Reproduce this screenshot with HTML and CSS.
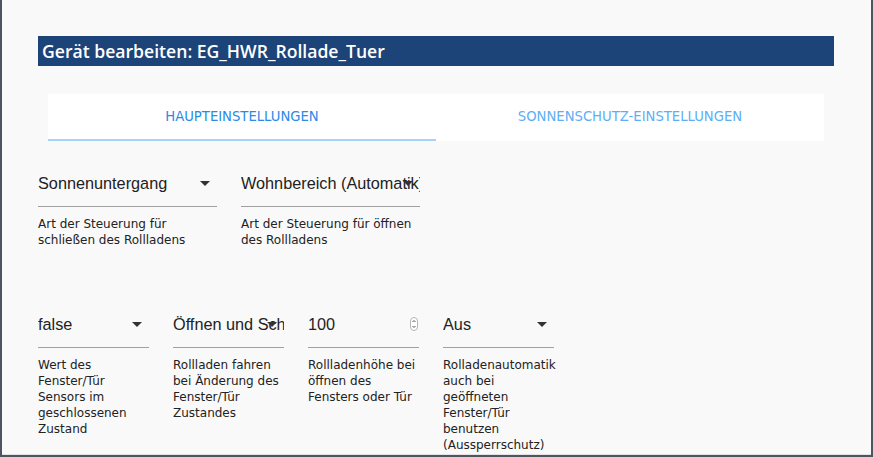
FILE: index.html
```html
<!DOCTYPE html>
<html lang="de">
<head>
    <meta charset="UTF-8">
    <title>Gerät bearbeiten</title>
    <link rel="stylesheet" href="styles.css">
</head>
<body>
    <div class="dialog">
        <h2 class="dialog-title">Gerät bearbeiten: EG_HWR_Rollade_Tuer</h2>

        <div class="tabs">
            <div class="tab active">Haupteinstellungen</div>
            <div class="tab">Sonnenschutz-Einstellungen</div>
        </div>

        <div class="row wide">
            <div class="field">
                <div class="control">
                    <span class="value">Sonnenuntergang</span>
                    <span class="arrow"></span>
                </div>
                <p class="helper">Art der Steuerung für schließen des Rollladens</p>
            </div>
            <div class="field">
                <div class="control">
                    <span class="value">Wohnbereich (Automatik)</span>
                    <span class="arrow"></span>
                </div>
                <p class="helper">Art der Steuerung für öffnen des Rollladens</p>
            </div>
        </div>

        <div class="row narrow">
            <div class="field">
                <div class="control">
                    <span class="value">false</span>
                    <span class="arrow"></span>
                </div>
                <p class="helper">Wert des Fenster/Tür Sensors im geschlossenen Zustand</p>
            </div>
            <div class="field">
                <div class="control">
                    <span class="value">Öffnen und Schließen</span>
                    <span class="arrow"></span>
                </div>
                <p class="helper">Rollladen fahren bei Änderung des Fenster/Tür Zustandes</p>
            </div>
            <div class="field">
                <div class="control">
                    <span class="value">100</span>
                    <svg class="spinner" width="8" height="14" viewBox="0 0 8 14">
                        <rect x="0.5" y="0.5" width="7" height="13" rx="3.5" fill="#fff" stroke="#b5b5b5"/>
                        <path d="M2.5 5 L4 3.5 L5.5 5 M2.5 9 L4 10.5 L5.5 9" fill="none" stroke="#555" stroke-width="1"/>
                    </svg>
                </div>
                <p class="helper">Rollladenhöhe bei öffnen des Fensters oder Tür</p>
            </div>
            <div class="field">
                <div class="control">
                    <span class="value">Aus</span>
                    <span class="arrow"></span>
                </div>
                <p class="helper">Rolladenautomatik auch bei geöffneten Fenster/Tür benutzen (Aussperrschutz)</p>
            </div>
        </div>
    </div>
</body>
</html>
```

FILE: styles.css
```css
body {
    margin: 0;
    width: 873px;
    height: 457px;
    overflow: hidden;
    background: #4d5560;
}

.dialog {
    margin-left: 2px;
    width: 869px;
    height: 455px;
    box-sizing: border-box;
    padding: 36px 37px 0 36px;
    background: #f9f9f9;
    border-bottom: 1px solid #e3e3e3;
    overflow: hidden;
}

.dialog-title {
    margin: 0;
    height: 30px;
    line-height: 30px;
    padding-left: 4px;
    background: #1c4479;
    color: #ffffff;
    font-family: 'Open Sans', sans-serif;
    font-weight: 600;
    font-size: 17.6px;
}

.tabs {
    display: grid;
    grid-template-columns: 1fr 1fr;
    margin: 28px 10px 0 10px;
    height: 47px;
    background: #ffffff;
}

.tab {
    text-align: center;
    line-height: 46px;
    font-family: 'DejaVu Sans', sans-serif;
    font-size: 13.2px;
    text-transform: uppercase;
    color: #5eaef5;
}

.tab.active {
    color: #2a8ae6;
    border-bottom: 2px solid #a7d1fb;
    line-height: 45px;
}

.row {
    display: flex;
    gap: 24px;
    margin-top: 32px;
}

.row.narrow {
    margin-top: 66px;
}

.row.wide .field {
    width: 179px;
}

.row.narrow .field {
    width: 111px;
}

.control {
    position: relative;
    height: 20px;
    line-height: 20px;
    padding-bottom: 13px;
    border-bottom: 1px solid #a0a0a0;
    font-family: 'Liberation Sans', sans-serif;
    font-size: 16.25px;
    color: #222;
}

.value {
    display: block;
    overflow: hidden;
    white-space: nowrap;
}

/* dropdown triangle over the value */
.arrow {
    position: absolute;
    right: 7px;
    top: 8px;
    width: 0;
    height: 0;
    border-left: 5px solid transparent;
    border-right: 5px solid transparent;
    border-top: 5px solid #333;
}

.spinner {
    position: absolute;
    right: 1px;
    top: 3px;
}

.helper {
    margin: 9px 0 0 0;
    font-family: 'DejaVu Sans', sans-serif;
    font-size: 12px;
    line-height: 16px;
    color: #222;
}
```
